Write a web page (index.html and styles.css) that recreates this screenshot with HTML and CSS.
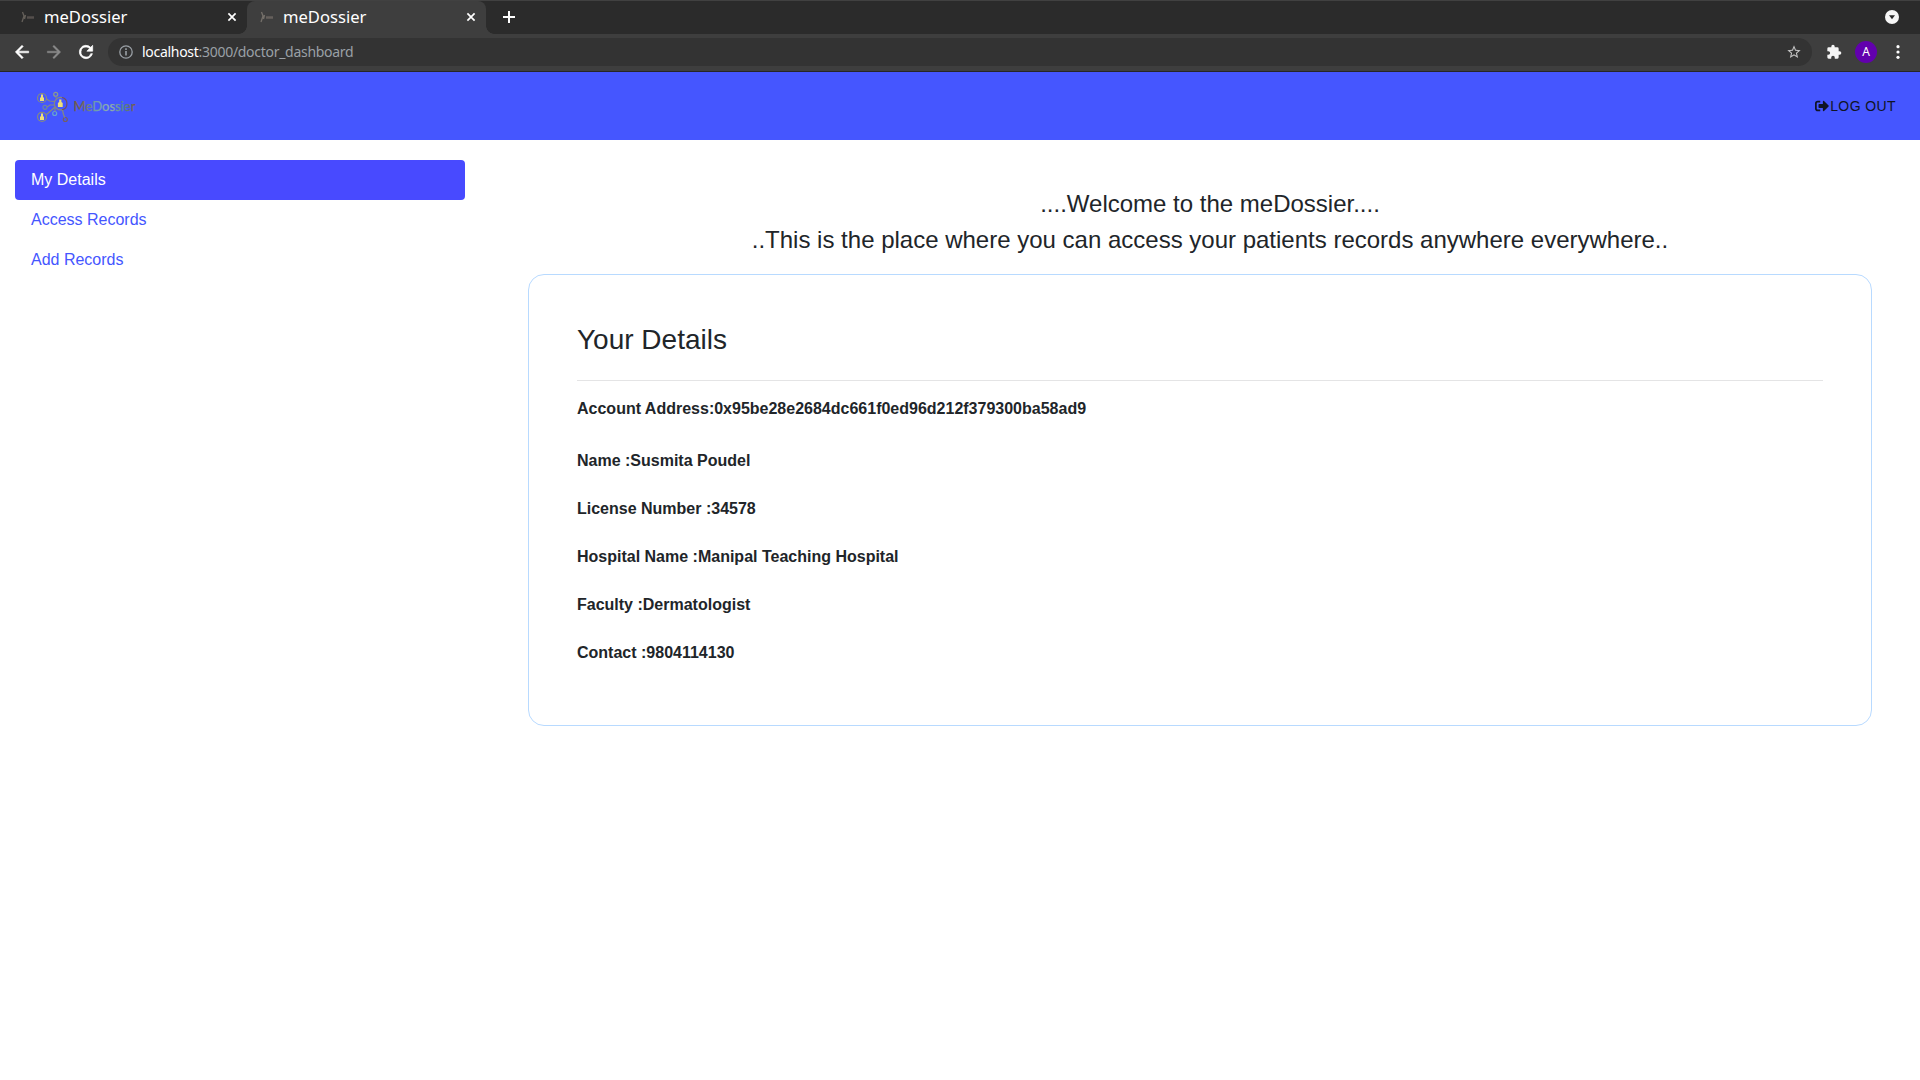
FILE: index.html
```html
<!DOCTYPE html>
<html lang="en">
<head>
<meta charset="utf-8">
<title>meDossier</title>
<link rel="stylesheet" href="styles.css">
</head>
<body>
<div class="tabstrip">
  <div class="tab">
    <svg class="favicon" viewBox="0 0 16 16"><path d="M2.500 3l1.500 4-2 6M5.500 6l-1 4" fill="none" stroke="#65605a" stroke-width="1.300"/><path d="M7 8.500h7" stroke="#554f4c" stroke-width="2.500"/></svg>
    <span class="tab-title">meDossier</span>
    <svg class="close" viewBox="0 0 10 10"><path d="M1.4 1.4l7.2 7.2M8.6 1.4l-7.2 7.2"/></svg>
  </div>
  <div class="tab active">
    <svg class="favicon" viewBox="0 0 16 16"><path d="M2.500 3l1.500 4-2 6M5.500 6l-1 4" fill="none" stroke="#75706a" stroke-width="1.300"/><path d="M7 8.500h7" stroke="#66605c" stroke-width="2.500"/></svg>
    <span class="tab-title">meDossier</span>
    <svg class="close" viewBox="0 0 10 10"><path d="M1.4 1.4l7.2 7.2M8.6 1.4l-7.2 7.2"/></svg>
  </div>
  <svg class="plus" viewBox="0 0 12 12"><path d="M6 0v12M0 6h12"/></svg>
  <svg class="tab-search" viewBox="0 0 14 14"><circle cx="7" cy="7" r="7" fill="#f7f7f7"/><path d="M4 5.2h6L7 9.3z" fill="#2b2b2b"/></svg>
</div>
<div class="toolbar">
  <svg class="tool" viewBox="0 0 24 24" fill="#fff"><path d="M20 11H7.83l5.59-5.59L12 4l-8 8 8 8 1.41-1.41L7.83 13H20z" stroke="#fff" stroke-width=".7"/></svg>
  <svg class="tool" viewBox="0 0 24 24" fill="#8b8b8b"><path d="M12 4l-1.41 1.41L16.17 11H4v2h12.17l-5.58 5.59L12 20l8-8z" stroke="#8b8b8b" stroke-width=".5"/></svg>
  <svg class="tool" viewBox="0 0 24 24" fill="#fff"><path d="M17.65 6.35A8 8 0 1 0 19.73 14h-2.08A6 6 0 1 1 12 6c1.66 0 3.14.69 4.22 1.78L13 11h7V4z" stroke="#fff" stroke-width=".8"/></svg>
  <div class="omnibox">
    <svg class="info" viewBox="0 0 14 14"><circle cx="7" cy="7" r="6.2" fill="none" stroke="#9aa0a6" stroke-width="1.3"/><path d="M7 3.3v1.6M7 6.1v4.4" stroke="#9aa0a6" stroke-width="1.6"/></svg>
    <span class="url"><span class="host">localhost</span>:3000/doctor_dashboard</span>
    <svg class="star" viewBox="0 0 24 24" fill="#c4c4c4"><path d="M22 9.24l-7.19-.62L12 2 9.19 8.63 2 9.24l5.46 4.73L5.82 21 12 17.27 18.18 21l-1.63-7.03zM12 15.4l-3.76 2.27 1-4.28-3.32-2.88 4.38-.38L12 6.1l1.71 4.04 4.38.38-3.32 2.88 1 4.28z"/></svg>
  </div>
  <svg class="puzzle" viewBox="0 0 24 24" fill="#f5f5f5"><path d="M20.5 11H19V7a2 2 0 0 0-2-2h-4V3.500a2.500 2.500 0 0 0-5 0V5H4a2 2 0 0 0-2 2v3.800h1.500a2.700 2.700 0 0 1 0 5.400H2V20a2 2 0 0 0 2 2h3.800v-1.500a2.700 2.700 0 0 1 5.400 0V22H17a2 2 0 0 0 2-2v-4h1.500a2.500 2.500 0 0 0 0-5z"/></svg>
  <span class="avatar">A</span>
  <svg class="menu" viewBox="0 0 4 14" fill="#fff"><circle cx="2" cy="1.7" r="1.6"/><circle cx="2" cy="7" r="1.6"/><circle cx="2" cy="12.300" r="1.6"/></svg>
</div>
<header class="navbar">
  <svg class="logo" viewBox="0 0 110 40">
    <defs><linearGradient id="tone" x1="0" x2="1"><stop offset="0" stop-color="#71573f"/><stop offset=".15" stop-color="#75685c"/><stop offset=".35" stop-color="#6c9dae"/><stop offset=".6" stop-color="#94b0b0"/><stop offset=".8" stop-color="#548a88"/><stop offset="1" stop-color="#785549"/></linearGradient></defs>
    <g transform="translate(-1 0)">
      <g fill="none" stroke="#858b80" stroke-width="1.200">
        <circle cx="8" cy="12" r="4.500"/><circle cx="8" cy="30.800" r="4.500"/><path d="M28 11.500a6.300 6.300 0 1 0 0 12.300"/><path d="M28 11.500a6.300 6.300 0 0 1 0 12.300" stroke="#75505a"/>
        <circle cx="21.700" cy="8.300" r="2" stroke="#8e9c8b"/><circle cx="11" cy="21.300" r="2" stroke="#6e85a0"/><circle cx="20.700" cy="27.500" r="2" stroke="#66a5cf"/><circle cx="31.300" cy="33.500" r="2" stroke="#75605e"/>
        <path d="M12.500 13l3 2 5 .5M22 10.300v2M13 21l3-2h4.500M12 29l9-8M21 25.500V22M28.500 24l1 4.500 1.200 3"/>
      </g>
      <path fill="#eedf78" d="M7 8.500h2v2.500l1 1v3H6v-3l1-1zM7 27.500h2v2.500l1 1v3H6v-3l1-1zM25.200 13.500h2.200v2.500l1.300 1v4h-4.800v-4l1.300-1z"/>
    </g>
    <text x="38.500" y="25.300" textLength="62" lengthAdjust="spacingAndGlyphs" fill="url(#tone)" stroke="url(#tone)" stroke-width=".25">MeDossier</text>
  </svg>
  <a class="logout"><svg viewBox="0 0 512 512" fill="#101426"><path d="M497 273L329 441c-15 15-41 4.500-41-17v-96H152c-13.300 0-24-10.700-24-24v-96c0-13.300 10.700-24 24-24h136V88c0-21.400 25.900-32 41-17l168 168c9.300 9.400 9.300 24.600 0 34zM192 436v-40c0-6.600-5.400-12-12-12H96c-17.700 0-32-14.300-32-32V160c0-17.700 14.300-32 32-32h84c6.600 0 12-5.400 12-12V76c0-6.600-5.400-12-12-12H96c-53 0-96 43-96 96v192c0 53 43 96 96 96h84c6.600 0 12-5.400 12-12z"/></svg><span>LOG OUT</span></a>
</header>
<div class="layout">
  <nav class="sidebar">
    <a class="link selected">My Details</a>
    <a class="link">Access Records</a>
    <a class="link">Add Records</a>
  </nav>
  <main class="content">
    <div class="welcome">....Welcome to the meDossier....<br>..This is the place where you can access your patients records anywhere everywhere..</div>
    <section class="card">
      <h3>Your Details</h3>
      <hr>
      <p class="address">Account Address:0x95be28e2684dc661f0ed96d212f379300ba58ad9</p>
      <p>Name :Susmita Poudel</p>
      <p>License Number :34578</p>
      <p>Hospital Name :Manipal Teaching Hospital</p>
      <p>Faculty :Dermatologist</p>
      <p>Contact :9804114130</p>
    </section>
  </main>
</div>
</body>
</html>
```
FILE: styles.css
```css
* { box-sizing: border-box; }
body { margin: 0; height: 1080px; overflow: hidden; background: #fff; color: #212529; font: 16px/24px "Liberation Sans", Arial, sans-serif; }
svg { display: block; flex: none; }

.tabstrip { display: flex; align-items: center; height: 34px; padding-left: 8px; background: #2b2b2b; border-top: 1px solid #414141; font-family: "Noto Sans", sans-serif; }
.tab { position: relative; display: flex; align-items: center; width: 239px; height: 33px; padding: 0 10px 2px 12px; color: #fff; }
.tab.active { background: #3e3e3e; border-radius: 8px 8px 0 0; }
.tab.active::before, .tab.active::after { content: ""; position: absolute; bottom: 0; width: 8px; height: 8px; }
.tab.active::before { left: -8px; background: radial-gradient(circle at 0 0, transparent 7.5px, #3e3e3e 8px); }
.tab.active::after { right: -8px; background: radial-gradient(circle at 100% 0, transparent 7.5px, #3e3e3e 8px); }
.favicon { width: 16px; height: 16px; margin-right: 8px; }
.tab-title { flex: 1; font-size: 16.6px; line-height: 20px; }
.close { width: 10px; height: 10px; stroke: #fff; stroke-width: 1.7; }
.plus { width: 12px; height: 12px; margin: 0 0 1px 17px; stroke: #fff; stroke-width: 2; }
.tab-search { width: 14px; height: 14px; margin: 0 21px 1px auto; }

.toolbar { display: flex; align-items: center; height: 38px; padding: 0 20px 2px 12px; background: #3e3e3e; border-bottom: 1px solid #262626; font-family: "Noto Sans", sans-serif; }
.tool { width: 20px; height: 20px; margin-right: 12px; }
.omnibox { display: flex; flex: 1; align-items: center; height: 28px; padding: 0 10px 0 11px; border-radius: 14px; background: #333; }
.info { width: 14px; height: 14px; }
.url { flex: 1; margin-left: 9px; color: #9aa0a6; font-size: 14px; line-height: 20px; letter-spacing: -.29px; }
.host { color: #fff; }
.star { width: 16px; height: 16px; }
.puzzle { width: 16px; height: 16px; margin: 0 13px 0 14px; }
.avatar { width: 22px; height: 22px; border-radius: 50%; background: #6200ae; color: #fff; font-size: 12px; line-height: 22px; text-align: center; }
.menu { width: 4px; height: 14px; margin-left: 19px; }

.navbar { display: flex; align-items: center; justify-content: space-between; height: 68px; padding: 0 24px 0 35px; background: #4556ff; }
.logo { width: 110px; height: 40px; font: 13px "Lato", sans-serif; }
.logout { display: flex; align-items: center; color: #101426; font-size: 14px; letter-spacing: .4px; }
.logout svg { width: 16px; height: 14px; }

.layout { display: flex; }
.sidebar { width: 480px; padding: 20px 15px; }
.link { display: block; padding: 8px 16px; border-radius: 4px; color: #4556ff; }
.link.selected { background: #484aff; color: #fff; }
.content { flex: 1; padding: 46px 48px 0; }
.welcome { margin: 0 -20px 16px 0; font-size: 24px; line-height: 36px; text-align: center; }
.card { height: 452px; padding: 48px; border: 1px solid #b8daff; border-radius: 16px; }
h3 { margin: 0; font-size: 28px; font-weight: 500; line-height: 34px; }
hr { height: 1px; margin: 23px 0 16px; border: 0; background: #e4e4e5; }
p { margin: 0 0 24px; font-weight: 700; }
.address { margin-bottom: 28px; }
```
